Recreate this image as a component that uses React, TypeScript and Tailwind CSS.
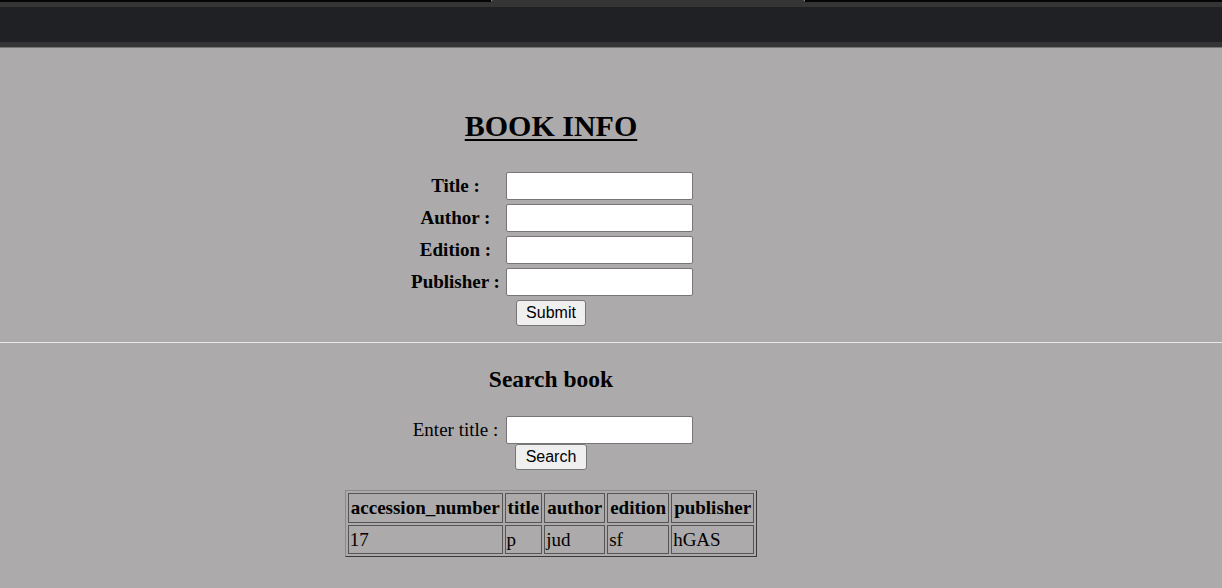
const fields = ["Title :", "Author :", "Edition :", "Publisher :"];

const rows = [
  { accession_number: "17", title: "p", author: "jud", edition: "sf", publisher: "hGAS" },
];

const columns = ["accession_number", "title", "author", "edition", "publisher"] as const;

const BrowserBar = () => (
  <div className="flex flex-col">
    <div className="flex h-[2px]">
      <div className="w-[491px] bg-[#050505]" />
      <div className="w-[314px] rounded-t-[3px] bg-[#353535]" />
      <div className="flex-1 bg-[#050505]" />
    </div>
    <div className="h-[5px] bg-[#353535]" />
    <div className="h-[35px] bg-[#202124]" />
    <div className="h-[5px] bg-[#353535]" />
    <div className="h-px bg-[#747474]" />
  </div>
);

const TextBox = () => (
  <input
    type="text"
    className="block h-[28px] w-[187px] rounded-[2px] border border-[#767676] bg-white px-1 outline-none"
  />
);

const Btn = ({ label, wide }: { label: string; wide?: boolean }) => (
  <button
    className={
      "block h-[26px] rounded-[3px] border border-[#767676] bg-[#efefef] text-[16px] leading-none text-black font-['Liberation_Sans',Arial,sans-serif] " +
      (wide ? "px-[10px]" : "px-[9px]")
    }
  >
    {label}
  </button>
);

export default function App() {
  return (
    <div className="min-h-screen bg-[#acaaab] text-black font-['Liberation_Serif','Times_New_Roman',serif]">
      <BrowserBar />

      {/* Add book form */}
      <section className="flex w-[1102px] flex-col items-center pt-[60px]">
        <h1 className="text-[30px] font-bold leading-[35px] underline decoration-2 underline-offset-[3px]">
          BOOK INFO
        </h1>
        <div className="mt-[29px] grid grid-cols-[92px_187px] grid-rows-[28px_28px_28px_28px] items-center gap-x-[4px] gap-y-[4px]">
          {fields.map((f) => (
            <div key={f} className="contents">
              <label className="text-center text-[19px] font-bold leading-[22px]">{f}</label>
              <TextBox />
            </div>
          ))}
        </div>
        <div className="mt-[4px]">
          <Btn label="Submit" />
        </div>
      </section>

      <div className="mt-[16px] h-px bg-[#e8e8e8]" />

      {/* Search */}
      <section className="flex w-[1102px] flex-col items-center pb-8">
        <h2 className="mt-[22px] text-[23.5px] font-bold leading-[28px]">Search book</h2>
        <div className="mt-[23px] grid grid-cols-[92px_187px] grid-rows-[28px] items-center gap-x-[4px]">
          <label className="text-center text-[19px] leading-[22px] whitespace-nowrap">Enter title :</label>
          <TextBox />
        </div>
        <div className="mt-[0px]">
          <Btn label="Search" wide />
        </div>

        <table className="mt-[20px] border-separate border-spacing-[2px] border border-t-[#8a8a8a] border-l-[#8a8a8a] border-r-[#3a3a3a] border-b-[#3a3a3a] text-[19px]">
          <thead>
            <tr>
              {columns.map((c) => (
                <th
                  key={c}
                  className="border border-[#555] px-[2px] py-[3px] font-bold leading-[22px]"
                >
                  {c}
                </th>
              ))}
            </tr>
          </thead>
          <tbody>
            {rows.map((r, i) => (
              <tr key={i}>
                {columns.map((c) => (
                  <td
                    key={c}
                    className="border border-[#555] px-[1px] py-[3px] text-left leading-[21px]"
                  >
                    {r[c]}
                  </td>
                ))}
              </tr>
            ))}
          </tbody>
        </table>
      </section>
    </div>
  );
}
